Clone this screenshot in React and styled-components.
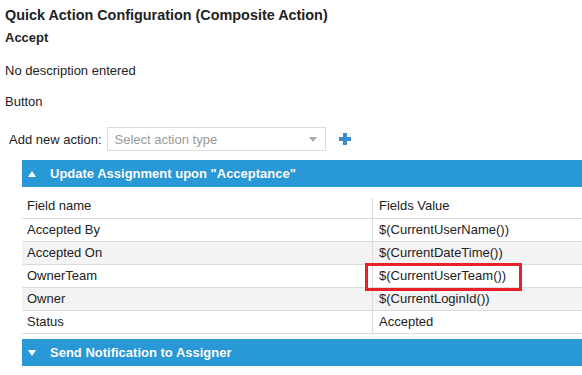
import React from 'react';
import styled, { createGlobalStyle } from 'styled-components';

const GlobalStyle = createGlobalStyle`
  body {
    margin: 0;
    background: #fff;
    font-family: "Liberation Sans", Arial, sans-serif;
    font-size: 13px;
    color: #222;
  }
`;

const Page = styled.div`
  padding: 5px 0 0 5px;
  width: 577px;
  overflow: hidden;
`;

const Title = styled.div`
  font-size: 14.4px;
  font-weight: bold;
  line-height: 20px;
`;

const Name = styled.div`
  font-weight: bold;
  line-height: 20px;
  margin-top: 3px;
`;

const Line = styled.div`
  line-height: 20px;
  margin-top: ${(p) => p.$gap}px;
`;

const ActionRow = styled.div`
  display: flex;
  align-items: center;
  height: 26px;
  margin-top: 14px;
  padding-left: 4px;
`;

const Label = styled.span`
  margin-right: 5px;
`;

const Select = styled.div`
  display: flex;
  align-items: center;
  justify-content: space-between;
  width: 219px;
  height: 24px;
  border: 1px solid #ddd;
  padding: 0 8px 0 7px;
  box-sizing: border-box;
  color: #999;
`;

const Caret = styled.span`
  width: 0;
  height: 0;
  border-left: 4px solid transparent;
  border-right: 4px solid transparent;
  border-top: 5px solid #aaa;
`;

const Plus = styled.span`
  position: relative;
  width: 12px;
  height: 12px;
  margin-left: 13px;
  &::before,
  &::after {
    content: '';
    position: absolute;
    background: #3a8ad0;
  }
  &::before {
    left: 0;
    top: 4px;
    width: 12px;
    height: 4px;
  }
  &::after {
    left: 4px;
    top: 0;
    width: 4px;
    height: 12px;
  }
`;

const Section = styled.div`
  margin-left: 17px;
  margin-top: ${(p) => p.$gap}px;
`;

const Bar = styled.div`
  display: flex;
  align-items: center;
  height: 27px;
  background: #2899d6;
  color: #fff;
  font-weight: bold;
  padding-left: 6px;
  text-shadow: 0 0 1px rgba(0, 0, 0, 0.15);
`;

const Arrow = styled.span`
  width: 0;
  height: 0;
  border-left: 4.5px solid transparent;
  border-right: 4.5px solid transparent;
  ${(p) => (p.$up ? 'border-bottom: 6px solid #fff;' : 'border-top: 6px solid #fff;')}
  margin-right: 14px;
`;

const Table = styled.div`
  display: grid;
  grid-template-columns: 350px 1fr;
`;

const Row = styled.div`
  display: contents;
`;

const Cell = styled.div`
  height: 22px;
  line-height: 22px;
  border-bottom: 1px solid #dcdcdc;
  padding-left: ${(p) => (p.$second ? 6 : 5)}px;
  background: ${(p) => (p.$alt ? '#f3f3f3' : '#fff')};
  ${(p) => p.$second && 'border-left: 1px solid #dcdcdc;'}
  position: relative;
`;

const HeadCell = styled.div`
  padding-top: 11px;
  border-bottom: 1px solid #dcdcdc;
`;

const HeadInner = styled.div`
  height: 20px;
  line-height: 15px;
  padding-left: ${(p) => (p.$second ? 6 : 5)}px;
  ${(p) => p.$second && 'border-left: 1px solid #dcdcdc;'}
`;

const Highlight = styled.span`
  position: absolute;
  z-index: 2;
  left: -8px;
  top: -2px;
  width: 151px;
  height: 22px;
  border: 3px solid #e8202a;
`;

const rows = [
  ['Accepted By', '$(CurrentUserName())'],
  ['Accepted On', '$(CurrentDateTime())'],
  ['OwnerTeam', '$(CurrentUserTeam())', true],
  ['Owner', '$(CurrentLoginId())'],
  ['Status', 'Accepted'],
];

export default function App() {
  return (
    <Page>
      <GlobalStyle />
      <Title>Quick Action Configuration (Composite Action)</Title>
      <Name>Accept</Name>
      <Line $gap={13}>No description entered</Line>
      <Line $gap={11}>Button</Line>
      <ActionRow>
        <Label>Add new action:</Label>
        <Select>
          <span>Select action type</span>
          <Caret />
        </Select>
        <Plus />
      </ActionRow>
      <Section $gap={8}>
        <Bar>
          <Arrow $up />
          Update Assignment upon "Acceptance"
        </Bar>
        <Table>
          <HeadCell><HeadInner>Field name</HeadInner></HeadCell>
          <HeadCell><HeadInner $second>Fields Value</HeadInner></HeadCell>
          {rows.map(([name, value, marked], i) => (
            <Row key={name}>
              <Cell $alt={i % 2 === 1}>{name}</Cell>
              <Cell $alt={i % 2 === 1} $second>
                {value}
                {marked && <Highlight />}
              </Cell>
            </Row>
          ))}
        </Table>
      </Section>
      <Section $gap={5}>
        <Bar>
          <Arrow />
          Send Notification to Assigner
        </Bar>
      </Section>
    </Page>
  );
}
